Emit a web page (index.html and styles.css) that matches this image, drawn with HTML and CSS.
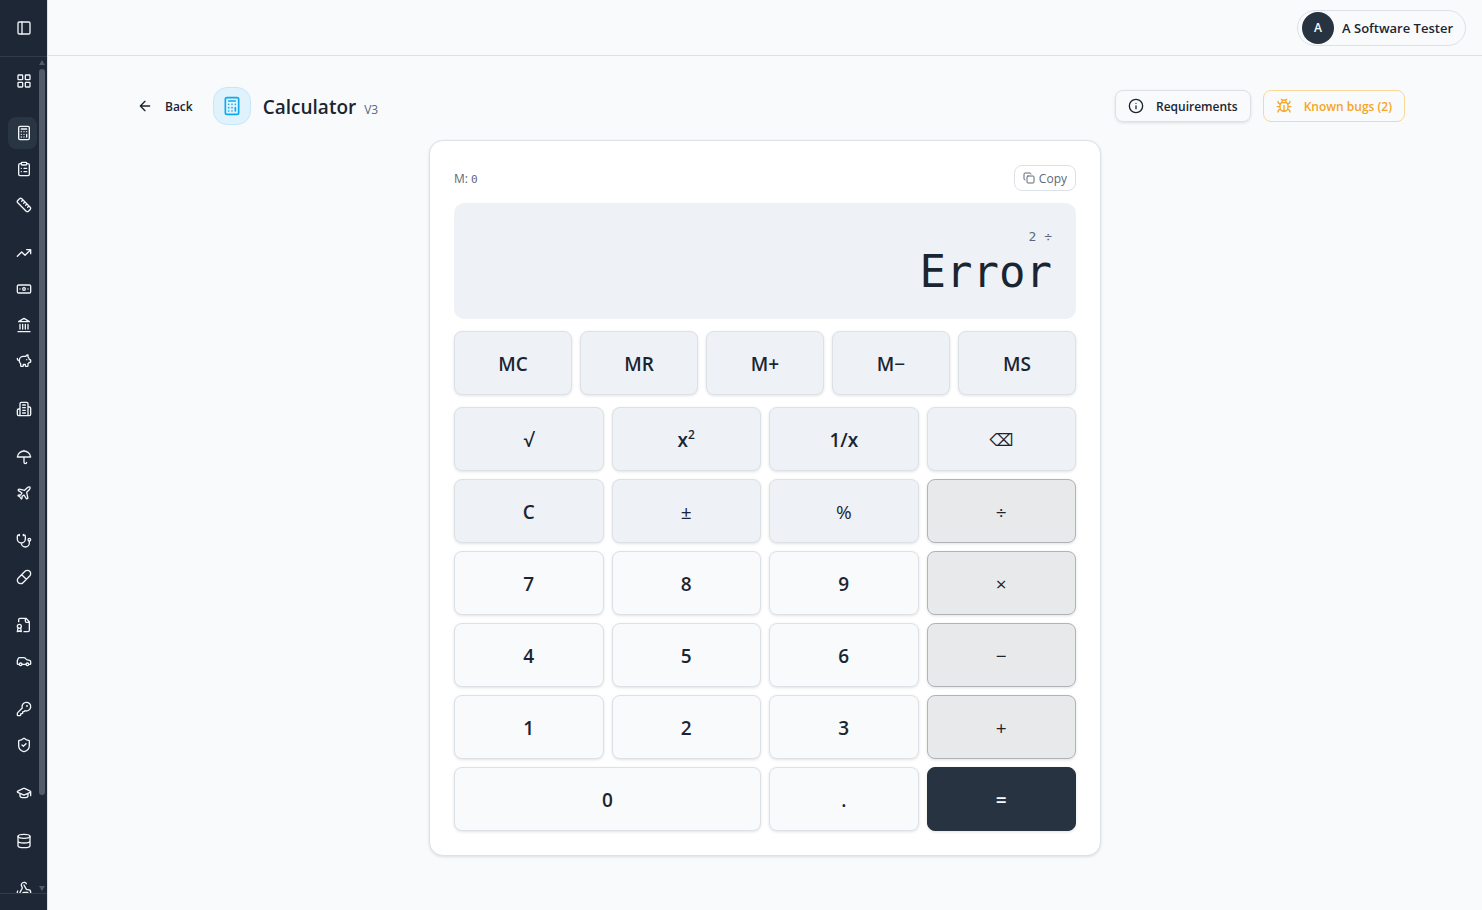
FILE: index.html
```html
<!DOCTYPE html>
<html lang="en">
<head>
<meta charset="utf-8">
<title>Calculator</title>
<meta name="viewport" content="width=device-width, initial-scale=1">
<link rel="stylesheet" href="styles.css">
</head>
<body>
<div class="app">
  <aside class="sidebar">
    <div class="sidebar-head">
      <button class="nav-item" type="button" aria-label="Toggle sidebar"><svg class="icon" viewBox="0 0 24 24"><rect width="18" height="18" x="3" y="3" rx="2"/><path d="M9 3v18"/></svg></button>
    </div>
    <div class="sidebar-body">
      <nav class="nav" aria-label="Main">
        <div class="nav-group nav-home">
          <a class="nav-item" href="#" aria-label="Dashboard"><svg class="icon" viewBox="0 0 24 24"><rect width="7" height="7" x="3" y="3" rx="1"/><rect width="7" height="7" x="14" y="3" rx="1"/><rect width="7" height="7" x="14" y="14" rx="1"/><rect width="7" height="7" x="3" y="14" rx="1"/></svg></a>
        </div>
        <div class="nav-group">
          <a class="nav-item active" href="#" aria-label="Calculator" aria-current="page"><svg class="icon" viewBox="0 0 24 24"><rect width="16" height="20" x="4" y="2" rx="2"/><path d="M8 6h8M16 14v4M16 10h.01M12 10h.01M8 10h.01M12 14h.01M8 14h.01M12 18h.01M8 18h.01"/></svg></a>
          <a class="nav-item" href="#" aria-label="Checklist"><svg class="icon" viewBox="0 0 24 24"><rect width="8" height="4" x="8" y="2" rx="1"/><path d="M16 4h2a2 2 0 0 1 2 2v14a2 2 0 0 1-2 2H6a2 2 0 0 1-2-2V6a2 2 0 0 1 2-2h2M12 11h4M12 16h4M8 11h.01M8 16h.01"/></svg></a>
          <a class="nav-item" href="#" aria-label="Unit converter"><svg class="icon" viewBox="0 0 24 24"><path d="M21.3 15.3a2.4 2.4 0 0 1 0 3.4l-2.6 2.6a2.4 2.4 0 0 1-3.4 0L2.7 8.7a2.41 2.41 0 0 1 0-3.4l2.6-2.6a2.41 2.41 0 0 1 3.4 0ZM14.5 12.5l2-2M11.5 9.5l2-2M8.5 6.5l2-2M17.5 15.5l2-2"/></svg></a>
        </div>
        <div class="nav-group">
          <a class="nav-item" href="#" aria-label="Trading"><svg class="icon" viewBox="0 0 24 24"><path d="M22 7l-8.500 8.500-5-5L2 17M16 7h6v6"/></svg></a>
          <a class="nav-item" href="#" aria-label="Payments"><svg class="icon" viewBox="0 0 24 24"><rect width="20" height="12" x="2" y="6" rx="2"/><circle cx="12" cy="12" r="2"/><path d="M6 12h.01M18 12h.01"/></svg></a>
          <a class="nav-item" href="#" aria-label="Banking"><svg class="icon" viewBox="0 0 24 24"><path d="M3 22h18M6 18v-7M10 18v-7M14 18v-7M18 18v-7M12 2l8 5H4z"/></svg></a>
          <a class="nav-item" href="#" aria-label="Savings"><svg class="icon" viewBox="0 0 24 24"><path d="M11 17h3v2a1 1 0 0 0 1 1h2a1 1 0 0 0 1-1v-3a3.160 3.160 0 0 0 2-2h1a1 1 0 0 0 1-1v-2a1 1 0 0 0-1-1h-1a5 5 0 0 0-2-4V3a4 4 0 0 0-3.200 1.600l-.3.4H11a6 6 0 0 0-6 6v1a5 5 0 0 0 2 4v3a1 1 0 0 0 1 1h2a1 1 0 0 0 1-1zM16 10h.01M2 8v1a2 2 0 0 0 2 2h1"/></svg></a>
        </div>
        <div class="nav-group">
          <a class="nav-item" href="#" aria-label="Property"><svg class="icon" viewBox="0 0 24 24"><path d="M6 22V4a2 2 0 0 1 2-2h8a2 2 0 0 1 2 2v18ZM6 12H4a2 2 0 0 0-2 2v6a2 2 0 0 0 2 2h2M18 9h2a2 2 0 0 1 2 2v9a2 2 0 0 1-2 2h-2M10 6h4M10 10h4M10 14h4M10 18h4"/></svg></a>
        </div>
        <div class="nav-group">
          <a class="nav-item" href="#" aria-label="Insurance"><svg class="icon" viewBox="0 0 24 24"><path d="M22 12a10.060 10.060 0 0 0-20 0ZM12 12v8a2 2 0 0 0 4 0M12 2v1"/></svg></a>
          <a class="nav-item" href="#" aria-label="Travel"><svg class="icon" viewBox="0 0 24 24"><path d="M17.800 19.200 16 11l3.500-3.500C21 6 21.500 4 21 3c-1-.5-3 0-4.500 1.500L13 8 4.800 6.200c-.5-.1-.9.1-1.100.5l-.3.5c-.2.5-.1 1 .3 1.300L9 12l-2 3H4l-1 1 3 2 2 3 1-1v-3l3-2 3.500 5.300c.3.4.8.5 1.300.3l.5-.2c.4-.3.6-.7.500-1.200z"/></svg></a>
        </div>
        <div class="nav-group">
          <a class="nav-item" href="#" aria-label="Health"><svg class="icon" viewBox="0 0 24 24"><path d="M11 2v2M5 2v2M5 3H4a2 2 0 0 0-2 2v4a6 6 0 0 0 12 0V5a2 2 0 0 0-2-2h-1M8 15a6 6 0 0 0 12 0v-3"/><circle cx="20" cy="10" r="2"/></svg></a>
          <a class="nav-item" href="#" aria-label="Pharmacy"><svg class="icon" viewBox="0 0 24 24"><path d="m10.500 20.500 10-10a4.950 4.950 0 1 0-7-7l-10 10a4.950 4.950 0 1 0 7 7ZM8.500 8.500l7 7"/></svg></a>
        </div>
        <div class="nav-group">
          <a class="nav-item" href="#" aria-label="Certificates"><svg class="icon" viewBox="0 0 24 24"><path d="M12 22h6a2 2 0 0 0 2-2V7l-5-5H6a2 2 0 0 0-2 2v3M14 2v4a2 2 0 0 0 2 2h4M7 16.500 8 22l-3-1-3 1 1-5.500"/><circle cx="5" cy="14" r="3"/></svg></a>
          <a class="nav-item" href="#" aria-label="Vehicles"><svg class="icon" viewBox="0 0 24 24"><path d="M19 17h2c.6 0 1-.4 1-1v-3c0-.9-.7-1.700-1.500-1.900C18.700 10.600 16 10 16 10s-1.300-1.400-2.200-2.300c-.5-.4-1.100-.7-1.800-.7H5c-.6 0-1.100.4-1.400.9l-1.400 2.900A3.700 3.700 0 0 0 2 12v4c0 .6.4 1 1 1h2M9 17h6"/><circle cx="7" cy="17" r="2"/><circle cx="17" cy="17" r="2"/></svg></a>
        </div>
        <div class="nav-group">
          <a class="nav-item" href="#" aria-label="Access"><svg class="icon" viewBox="0 0 24 24"><path d="M2.586 17.414A2 2 0 0 0 2 18.828V21a1 1 0 0 0 1 1h3a1 1 0 0 0 1-1v-1a1 1 0 0 1 1-1h1a1 1 0 0 0 1-1v-1a1 1 0 0 1 1-1h.172a2 2 0 0 0 1.414-.586l.814-.814a6.500 6.500 0 1 0-4-4z"/><circle cx="16.500" cy="7.500" r=".5"/></svg></a>
          <a class="nav-item" href="#" aria-label="Security"><svg class="icon" viewBox="0 0 24 24"><path d="M20 13c0 5-3.500 7.500-7.660 8.950a1 1 0 0 1-.67-.01C7.500 20.500 4 18 4 13V6a1 1 0 0 1 1-1c2 0 4.500-1.200 6.240-2.720a1.170 1.170 0 0 1 1.520 0C14.510 3.810 17 5 19 5a1 1 0 0 1 1 1zM9 12l2 2 4-4"/></svg></a>
        </div>
        <div class="nav-group">
          <a class="nav-item" href="#" aria-label="Education"><svg class="icon" viewBox="0 0 24 24"><path d="M21.420 10.922a1 1 0 0 0-.019-1.838L12.830 5.180a2 2 0 0 0-1.660 0L2.600 9.080a1 1 0 0 0 0 1.832l8.570 3.908a2 2 0 0 0 1.660 0zM22 10v6M6 12.500V16a6 3 0 0 0 12 0v-3.500"/></svg></a>
        </div>
        <div class="nav-group">
          <a class="nav-item" href="#" aria-label="Data"><svg class="icon" viewBox="0 0 24 24"><ellipse cx="12" cy="5" rx="9" ry="3"/><path d="M3 5v14a9 3 0 0 0 18 0V5M3 12a9 3 0 0 0 18 0"/></svg></a>
        </div>
        <div class="nav-group">
          <a class="nav-item" href="#" aria-label="Webhooks"><svg class="icon" viewBox="0 0 24 24"><path d="M18 16.980h-5.990c-1.100 0-1.950.94-2.480 1.900A4 4 0 0 1 2 17c.01-.7.2-1.400.57-2M6 17l3.130-5.780c.53-.97.1-2.180-.5-3.100a4 4 0 1 1 6.890-4.060M12 6l3.130 5.730C15.660 12.700 16.900 13 18 13a4 4 0 0 1 0 8"/></svg></a>
        </div>
      </nav>
      <div class="scrollbar" aria-hidden="true"><span class="arrow-up"></span><span class="thumb"></span><span class="arrow-down"></span></div>
    </div>
    <div class="sidebar-foot"></div>
  </aside>

  <div class="page">
    <header class="topbar">
      <button class="user" type="button"><span class="avatar">A</span><span>A Software Tester</span></button>
    </header>
    <main class="content">
      <div class="title-row">
        <button class="btn btn-ghost" type="button"><svg class="icon" viewBox="0 0 24 24"><path d="m12 19-7-7 7-7M19 12H5"/></svg>Back</button>
        <span class="app-tile"><svg class="icon icon-tile" viewBox="0 0 24 24"><rect width="16" height="20" x="4" y="2" rx="2"/><path d="M8 6h8M16 14v4M16 10h.01M12 10h.01M8 10h.01M12 14h.01M8 14h.01M12 18h.01M8 18h.01"/></svg></span>
        <div class="title"><h1>Calculator</h1><span class="version">V3</span></div>
        <div class="actions">
          <button class="btn btn-outline" type="button"><svg class="icon" viewBox="0 0 24 24"><circle cx="12" cy="12" r="10"/><path d="M12 16v-4M12 8h.01"/></svg>Requirements</button>
          <button class="btn btn-warn" type="button"><svg class="icon" viewBox="0 0 24 24"><path d="m8 2 1.880 1.880M14.120 3.880 16 2M9 7.130v-1a3.003 3.003 0 1 1 6 0v1M12 20c-3.300 0-6-2.700-6-6v-3a4 4 0 0 1 4-4h4a4 4 0 0 1 4 4v3c0 3.300-2.700 6-6 6M12 20v-9M6.530 9C4.600 8.800 3 7.100 3 5M6 13H2M3 21c0-2.100 1.700-3.900 3.800-4M20.970 5c0 2.100-1.600 3.800-3.500 4M22 13h-4M17.200 17c2.100.1 3.800 1.900 3.800 4"/></svg>Known bugs (2)</button>
        </div>
      </div>

      <section class="card" aria-label="Calculator">
        <div class="card-head">
          <span class="memory">M: <span class="mono">0</span></span>
          <button class="copy" type="button"><svg class="icon icon-copy" viewBox="0 0 24 24"><rect width="14" height="14" x="8" y="8" rx="2"/><path d="M4 16c-1.100 0-2-.9-2-2V4c0-1.100.9-2 2-2h10c1.100 0 2 .9 2 2"/></svg>Copy</button>
        </div>
        <div class="display">
          <div class="expression">2 ÷</div>
          <output class="result">Error</output>
        </div>
        <div class="keys keys-memory">
          <button class="key fn" type="button">MC</button>
          <button class="key fn" type="button">MR</button>
          <button class="key fn" type="button">M+</button>
          <button class="key fn" type="button">M−</button>
          <button class="key fn" type="button">MS</button>
        </div>
        <div class="keys keys-main">
          <button class="key fn" type="button">√</button>
          <button class="key fn" type="button">x<sup>2</sup></button>
          <button class="key fn" type="button">1/x</button>
          <button class="key fn symbol" type="button" aria-label="Backspace">⌫</button>
          <button class="key fn" type="button">C</button>
          <button class="key fn light" type="button">±</button>
          <button class="key fn light" type="button">%</button>
          <button class="key op" type="button">÷</button>
          <button class="key" type="button">7</button>
          <button class="key" type="button">8</button>
          <button class="key" type="button">9</button>
          <button class="key op" type="button">×</button>
          <button class="key" type="button">4</button>
          <button class="key" type="button">5</button>
          <button class="key" type="button">6</button>
          <button class="key op" type="button">−</button>
          <button class="key" type="button">1</button>
          <button class="key" type="button">2</button>
          <button class="key" type="button">3</button>
          <button class="key op" type="button">+</button>
          <button class="key wide" type="button">0</button>
          <button class="key" type="button">.</button>
          <button class="key equals" type="button">=</button>
        </div>
      </section>
    </main>
  </div>
</div>
</body>
</html>
```
FILE: styles.css
```css
:root {
  --bg: #f9fafc;
  --ink: #1b2531;
  --muted: #5c6879;
  --line: #dce1e8;
  --panel: #eef2f7;
  --navy: #1d2736;
  --primary: #283342;
  --shadow: 0 1px 3px rgba(15, 23, 42, 0.12);
}

* {
  box-sizing: border-box;
}

body {
  margin: 0;
  background: var(--bg);
  color: var(--ink);
  font-family: "Open Sans", "Noto Sans", sans-serif;
  font-size: 14px;
}

button {
  font: inherit;
  color: inherit;
  background: none;
  border: 0;
  padding: 0;
}

.icon {
  flex: none;
  width: 16px;
  height: 16px;
  fill: none;
  stroke: currentColor;
  stroke-width: 2;
  stroke-linecap: round;
  stroke-linejoin: round;
}

.app {
  display: flex;
  min-height: 100vh;
}

/* Sidebar */
.sidebar {
  position: sticky;
  top: 0;
  display: flex;
  flex-direction: column;
  flex: none;
  width: 48px;
  height: 100vh;
  background: var(--navy);
  color: #f1f5f9;
  border-right: 1px solid var(--line);
}

.sidebar-head {
  display: flex;
  align-items: center;
  height: 57px;
  padding: 0 8px;
  border-bottom: 1px solid #303b4b;
}

.sidebar-body {
  display: flex;
  flex: 1;
  min-height: 0;
}

.nav {
  display: flex;
  flex-direction: column;
  gap: 16px;
  flex: 1;
  padding: 8px 0 0 8px;
  overflow: hidden;
}

.nav-group {
  display: flex;
  flex-direction: column;
  gap: 4px;
}

.nav-home {
  padding-bottom: 4px;
}

.nav-item {
  display: flex;
  align-items: center;
  height: 32px;
  padding: 0 8px;
  border-radius: 8px;
  color: inherit;
}

.nav-item.active {
  background: #2a3543;
}

.scrollbar {
  display: flex;
  flex-direction: column;
  align-items: center;
  width: 10px;
  padding: 3px 0 2px;
}

.thumb {
  width: 6px;
  height: 726px;
  max-height: 88%;
  margin-top: 4px;
  border-radius: 3px;
  background: #515b6a;
}

.arrow-up,
.arrow-down {
  border: 3px solid transparent;
}

.arrow-up {
  border-top: 0;
  border-bottom: 5px solid #515b6a;
}

.arrow-down {
  margin-top: auto;
  border-bottom: 0;
  border-top: 5px solid #515b6a;
}

.sidebar-foot {
  height: 17px;
  border-top: 1px solid #303b4b;
}

/* Page */
.page {
  flex: 1;
  min-width: 0;
}

.topbar {
  display: flex;
  align-items: center;
  justify-content: flex-end;
  height: 56px;
  padding: 0 16px;
  border-bottom: 1px solid var(--line);
}

.user {
  display: flex;
  align-items: center;
  gap: 8px;
  height: 36px;
  padding: 0 12px 0 4px;
  border: 1px solid var(--line);
  border-radius: 18px;
  font-weight: 600;
  font-size: 13px;
}

.avatar {
  display: grid;
  place-items: center;
  width: 32px;
  height: 32px;
  border-radius: 50%;
  background: var(--primary);
  color: #f9fafc;
  font-size: 12px;
}

.content {
  max-width: 1280px;
  margin: 0 auto;
  padding: 31px 0 54px;
}

.title-row {
  display: flex;
  align-items: center;
  gap: 12px;
  min-height: 38px;
  margin-bottom: 15px;
}

.btn {
  display: flex;
  align-items: center;
  gap: 12px;
  height: 32px;
  padding: 0 12px;
  border-radius: 8px;
  font-size: 12px;
  font-weight: 600;
}

.btn-ghost {
  padding-right: 8px;
}

.btn-outline {
  border: 1px solid var(--line);
  box-shadow: var(--shadow);
}

.btn-warn {
  border: 1px solid #f9d795;
  color: #f5a524;
}

.app-tile {
  display: grid;
  place-items: center;
  width: 38px;
  height: 38px;
  border: 1px solid #c3e8fb;
  border-radius: 14px;
  background: #e0f2fc;
  color: #0eaaf0;
}

.icon-tile {
  width: 20px;
  height: 20px;
}

.title {
  display: flex;
  align-items: baseline;
  gap: 8px;
  padding-top: 2px;
}

.title h1 {
  margin: 0;
  font-size: 19px;
  font-weight: 600;
}

.version {
  font-size: 12px;
  color: var(--muted);
}

.actions {
  display: flex;
  gap: 12px;
  margin-left: auto;
}

/* Calculator */
.card {
  display: flex;
  flex-direction: column;
  gap: 12px;
  max-width: 672px;
  margin: 0 auto;
  padding: 24px;
  border: 1px solid var(--line);
  border-radius: 14px;
  background: #fff;
  box-shadow: var(--shadow);
}

.card-head {
  display: flex;
  align-items: center;
  justify-content: space-between;
  font-size: 12px;
  color: var(--muted);
}

.mono {
  font-family: "DejaVu Sans Mono", monospace;
  font-size: 11px;
}

.copy {
  display: flex;
  align-items: center;
  gap: 4px;
  height: 26px;
  padding: 0 8px;
  border: 1px solid var(--line);
  border-radius: 8px;
}

.icon-copy {
  width: 12px;
  height: 12px;
}

.display {
  padding: 24px 24px 22px;
  border-radius: 10px;
  background: var(--panel);
  font-family: "DejaVu Sans Mono", monospace;
  text-align: right;
}

.expression {
  font-size: 13px;
  line-height: 20px;
  color: var(--muted);
}

.result {
  display: block;
  font-size: 44px;
  line-height: 50px;
}

.keys {
  display: grid;
  grid-auto-rows: 64px;
  gap: 8px;
}

.keys-memory {
  grid-template-columns: repeat(5, 1fr);
}

.keys-main {
  grid-template-columns: repeat(4, 1fr);
}

.key {
  padding-top: 2px;
  border: 1px solid var(--line);
  border-radius: 8px;
  background: var(--bg);
  box-shadow: var(--shadow);
  font-size: 19px;
  font-weight: 600;
}

.key sup {
  font-size: 12px;
  line-height: 0;
  vertical-align: 8px;
}

.fn {
  background: var(--panel);
}

.light {
  font-weight: 400;
}

.symbol {
  font-family: "DejaVu Sans", sans-serif;
  font-size: 17px;
  font-weight: 400;
}

.op {
  border-color: #b0b3b8;
  background: #e8e9eb;
  font-weight: 400;
}

.wide {
  grid-column: span 2;
}

.equals {
  border-color: var(--primary);
  background: var(--primary);
  color: #f9fafc;
}
```
